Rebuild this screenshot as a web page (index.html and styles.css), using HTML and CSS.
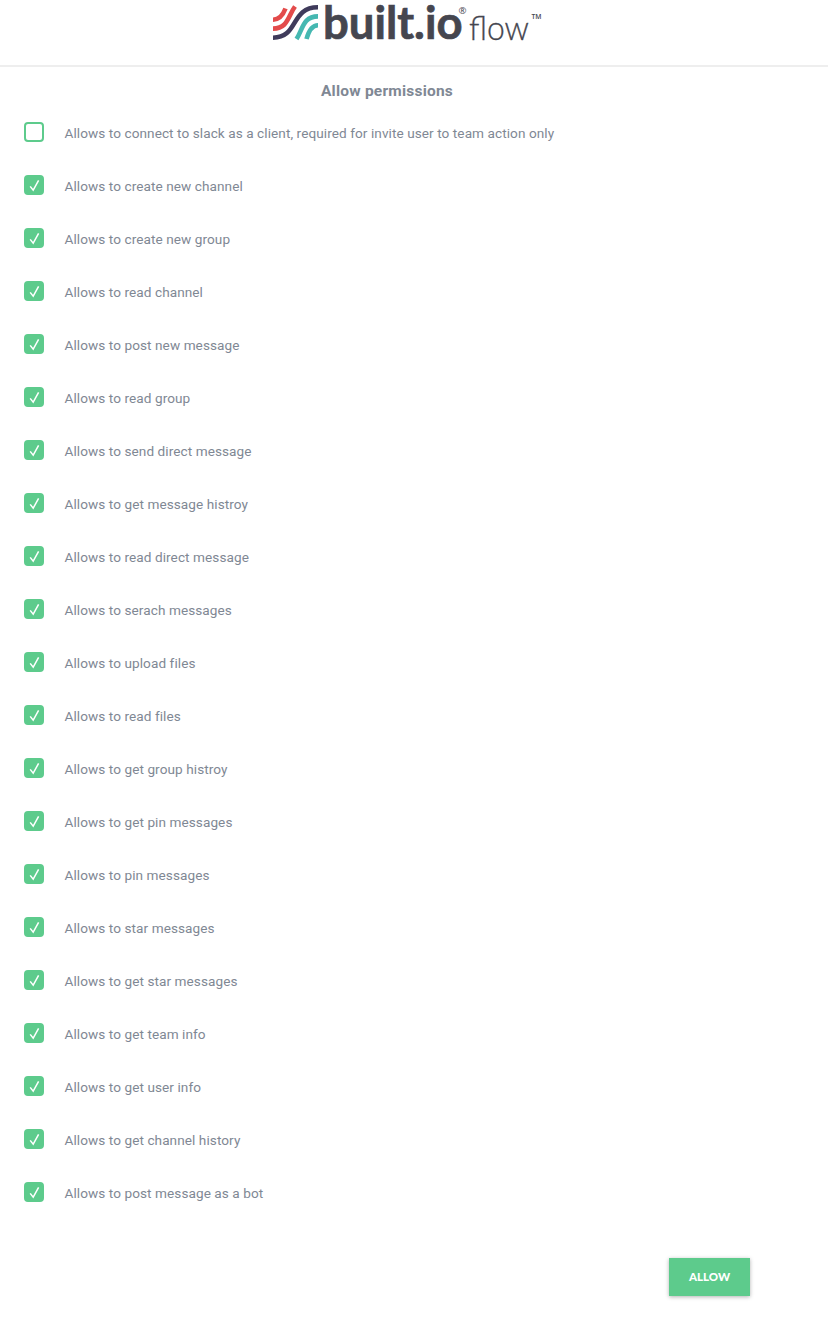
FILE: index.html
```html
<!DOCTYPE html>
<html lang="en">
<head>
<meta charset="utf-8">
<title>Allow permissions</title>
<link rel="stylesheet" href="styles.css">
</head>
<body>
<header class="header">
  <svg class="logo" width="272" height="46" viewBox="272 0 272 46" role="img" aria-label="built.io flow">
    <g fill="none" stroke-width="4.6">
      <path stroke="#e34b4b" d="M273 19.700C279 19.700 283 15 285.500 8.500"/>
      <path stroke="#e34b4b" d="M273 28.600C288 28.600 288 16 295 6.500"/>
      <path stroke="#3f3b5b" d="M273 37.700C299 37.700 290 7.300 318 7.300"/>
      <path stroke="#45b8b1" d="M318 16.400C303 16.400 303 29 296.500 39"/>
      <path stroke="#45b8b1" d="M318 25.300C312 25.300 309 30 306.500 39"/>
    </g>
    <text class="logo-name" x="323" y="39.300" textLength="139.500" lengthAdjust="spacingAndGlyphs">built.io</text>
    <text class="logo-reg" x="458.500" y="14" textLength="8" lengthAdjust="spacingAndGlyphs">®</text>
    <text class="logo-flow" x="469" y="39.500" textLength="60" lengthAdjust="spacingAndGlyphs">flow</text>
    <text class="logo-tm" x="531.500" y="18.500" textLength="10" lengthAdjust="spacingAndGlyphs">TM</text>
  </svg>
</header>
<main class="content">
  <h1 class="title">Allow permissions</h1>
  <ul class="permissions" id="permissions"></ul>
  <div class="actions"><button class="allow" type="button">ALLOW</button></div>
</main>
<script src="app.js"></script>
</body>
</html>
```

FILE: styles.css
```css
* { box-sizing: border-box; }
body {
  margin: 0;
  background: #fff;
  color: #7f8894;
  font-family: Roboto, "Liberation Sans", sans-serif;
}
.header {
  height: 67px;
  border-bottom: 2px solid #eee;
  display: flex;
  align-items: flex-start;
  padding-left: 272px;
}
.logo { display: block; overflow: visible; fill: #45464f; }
.logo-name { font: 700 46px Lato, sans-serif; stroke: #45464f; stroke-width: .7px; }
.logo-flow { font: 300 33px Lato, sans-serif; stroke: #45464f; stroke-width: .3px; }
.logo-reg { font: 400 9px "Open Sans", sans-serif; }
.logo-tm { font: 600 7.5px "Open Sans", sans-serif; }
.title {
  margin: 0;
  padding: 14px 54px 0 0;
  height: 55px;
  font-size: 15.5px;
  letter-spacing: .22px;
  line-height: 20px;
  font-weight: 700;
  text-align: center;
}
.permissions {
  list-style: none;
  margin: 0;
  padding: 0 0 0 24px;
}
.permission {
  height: 53px;
  display: flex;
  align-items: flex-start;
  gap: 20.5px;
  font-size: 13.6px;
  letter-spacing: .07px;
  line-height: 22px;
  white-space: nowrap;
}
.box {
  width: 20px;
  height: 20px;
  flex: none;
  border: 2px solid #5dcb8c;
  border-radius: 4px;
}
.box.checked { background: #5dcb8c; }
.check {
  display: block;
  width: 16px;
  height: 16px;
  fill: none;
  stroke: #fff;
  stroke-width: 1.5;
}
.actions {
  display: flex;
  justify-content: flex-end;
  padding: 23px 78px 31px 0;
}
.allow {
  width: 81px;
  height: 38px;
  padding: 0;
  border: 0;
  background: #5dcb8c;
  color: #fff;
  font: 900 11.5px/38px Lato, sans-serif;
  box-shadow: 0 1px 4px rgba(0, 0, 0, .3);
}
```

FILE: app.js
```js
const permissions = [
  "connect to slack as a client, required for invite user to team action only",
  "create new channel", "create new group", "read channel", "post new message",
  "read group", "send direct message", "get message histroy", "read direct message",
  "serach messages", "upload files", "read files", "get group histroy",
  "get pin messages", "pin messages", "star messages", "get star messages",
  "get team info", "get user info", "get channel history", "post message as a bot"
];
const check = '<svg class="check" viewBox="0 0 16 16"><path d="M4.200 9.400L7.200 13.200L12.600 3.300"/></svg>';
document.getElementById("permissions").innerHTML = permissions.map((text, i) =>
  `<li class="permission"><span class="box${i ? " checked" : ""}">${i ? check : ""}</span><span class="label">Allows to ${text}</span></li>`
).join("");
```
